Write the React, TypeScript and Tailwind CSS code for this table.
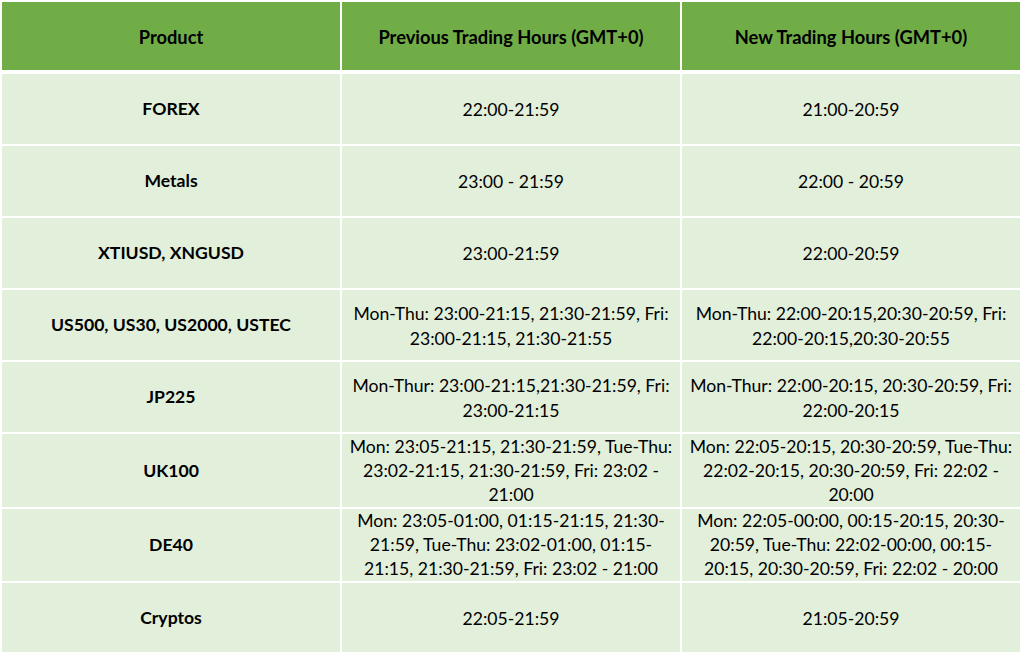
import React from 'react';

type Row = {
  product: string;
  prev: string[];
  next: string[];
  h: string;
};

const ROWS: Row[] = [
  { product: 'FOREX', prev: ['22:00-21:59'], next: ['21:00-20:59'], h: 'h-[70px]' },
  { product: 'Metals', prev: ['23:00 - 21:59'], next: ['22:00 - 20:59'], h: 'h-[70px]' },
  { product: 'XTIUSD, XNGUSD', prev: ['23:00-21:59'], next: ['22:00-20:59'], h: 'h-[70px]' },
  {
    product: 'US500, US30, US2000, USTEC',
    prev: ['Mon-Thu: 23:00-21:15, 21:30-21:59, Fri:', '23:00-21:15, 21:30-21:55'],
    next: ['Mon-Thu: 22:00-20:15,20:30-20:59, Fri:', '22:00-20:15,20:30-20:55'],
    h: 'h-[70px]',
  },
  {
    product: 'JP225',
    prev: ['Mon-Thur: 23:00-21:15,21:30-21:59, Fri:', '23:00-21:15'],
    next: ['Mon-Thur: 22:00-20:15, 20:30-20:59, Fri:', '22:00-20:15'],
    h: 'h-[70px]',
  },
  {
    product: 'UK100',
    prev: ['Mon: 23:05-21:15, 21:30-21:59, Tue-Thu:', '23:02-21:15, 21:30-21:59, Fri: 23:02 -', '21:00'],
    next: ['Mon: 22:05-20:15, 20:30-20:59, Tue-Thu:', '22:02-20:15, 20:30-20:59, Fri: 22:02 -', '20:00'],
    h: 'h-[73px]',
  },
  {
    product: 'DE40',
    prev: ['Mon: 23:05-01:00, 01:15-21:15, 21:30-', '21:59, Tue-Thu: 23:02-01:00, 01:15-', '21:15, 21:30-21:59, Fri: 23:02 - 21:00'],
    next: ['Mon: 22:05-00:00, 00:15-20:15, 20:30-', '20:59, Tue-Thu: 22:02-00:00, 00:15-', '20:15, 20:30-20:59, Fri: 22:02 - 20:00'],
    h: 'h-[72px]',
  },
  { product: 'Cryptos', prev: ['22:05-21:59'], next: ['21:05-20:59'], h: 'h-[69px]' },
];

function Lines({ lines }: { lines: string[] }) {
  const lh = lines.length > 2 ? 'leading-[24px]' : 'leading-[25px] pt-[1px]';
  return (
    <div className={`flex flex-col items-center ${lh}`}>
      {lines.map((l) => (
        <span key={l} className="whitespace-nowrap">{l}</span>
      ))}
    </div>
  );
}

export default function App() {
  return (
    <div className="w-[1024px] h-[656px] bg-white p-[2px] font-['Lato','Liberation_Sans',sans-serif] text-[17.6px] text-black">
      <div className="w-[1018px] flex flex-col gap-[2px]">
        <div className="grid grid-cols-3 gap-[2px] h-[68px] mb-[2px] font-bold text-[18.3px]">
          <div className="bg-[#70ad47] flex items-center justify-center pt-[3px]">Product</div>
          <div className="bg-[#70ad47] flex items-center justify-center pt-[3px]">Previous Trading Hours (GMT+0)</div>
          <div className="bg-[#70ad47] flex items-center justify-center pt-[3px]">New Trading Hours (GMT+0)</div>
        </div>
        {ROWS.map((r) => (
          <div key={r.product} className={`grid grid-cols-3 gap-[2px] ${r.h}`}>
            <div className="bg-[#e2efda] flex items-center justify-center pt-[1px] font-bold overflow-hidden">{r.product}</div>
            <div className="bg-[#e2efda] flex items-center justify-center overflow-hidden">
              <Lines lines={r.prev} />
            </div>
            <div className="bg-[#e2efda] flex items-center justify-center overflow-hidden">
              <Lines lines={r.next} />
            </div>
          </div>
        ))}
      </div>
    </div>
  );
}
